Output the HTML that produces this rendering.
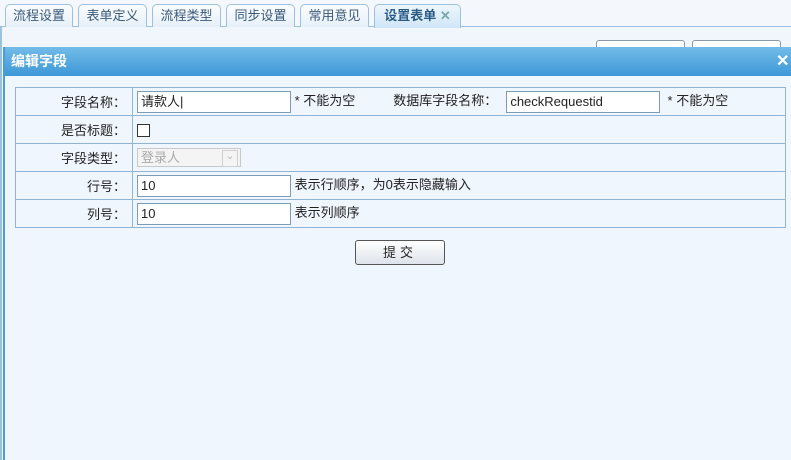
<!DOCTYPE html>
<html><head><meta charset="utf-8"><style>
*{margin:0;padding:0;box-sizing:border-box}
html,body{width:791px;height:460px;overflow:hidden}
body{background:#f1f6fc;font-family:"Liberation Sans","Noto Sans CJK SC",sans-serif;font-size:13px;color:#222;position:relative}
.tabbar{position:absolute;left:0;top:0;width:791px;height:27px;border-bottom:1px solid #9cc0dd;background:#f4f8fc}
.tab{position:absolute;top:4px;height:23px;border:1px solid #9cc0dd;border-bottom:none;border-radius:5px 5px 0 0;background:linear-gradient(#fbfdff,#e6eff8);color:#3a5a7a;font-size:13px;text-align:center;line-height:21px}
.tab.act{background:linear-gradient(#eef6fd,#cfe6f8);font-weight:bold;color:#2a5a86;height:24px}
.lb{position:absolute;left:0;top:27px;width:2px;height:433px;background:#9cc0dd}
.btnbg{position:absolute;top:40px;height:12px;border:1px solid #8a9aaa;border-radius:3px;background:#fff}
.dlg{position:absolute;left:3px;top:47px;width:788px;height:413px;border-left:2px solid #4a9ed6;background:#f0f6fd;overflow:hidden}
.hd{height:29px;background:linear-gradient(#72bbe9,#3d98d6);color:#fff;font-weight:bold;font-size:14px;line-height:29px;padding-left:6px}
.x{position:absolute;left:771px;top:7px;width:15px;height:15px;color:#fff;font-weight:bold;font-size:16px;line-height:15px}
table{position:absolute;left:10px;top:40px;width:771px;border-collapse:collapse;background:#f0f6fd}
td{border:1px solid #90b4d2;height:28px;padding:0 4px;white-space:nowrap}
td.l{width:117px;text-align:right;padding-right:6px}
.in{display:inline-block;vertical-align:middle;width:154px;height:22px;border:1px solid #7f9db9;background:#fff;line-height:20px;padding-left:3px;font-size:13px}
.cb{display:inline-block;vertical-align:middle;width:13px;height:13px;border:1px solid #333;background:#fff}
.sel{display:inline-block;vertical-align:middle;width:104px;height:19px;border:1px solid #c9c9c9;background:#f4f4f4;color:#aaa;line-height:17px;padding-left:3px;position:relative}
.sel:after{content:"⌄";position:absolute;right:2px;top:1px;width:14px;height:15px;border:1px solid #d0d0d0;color:#bbb;font-size:11px;text-align:center;line-height:10px}
.sub{position:absolute;left:350px;top:193px;width:90px;height:25px;border:1px solid #555;border-radius:3px;background:linear-gradient(#fff,#dde3ea);text-align:center;line-height:23px;letter-spacing:4px}
</style></head><body>
<div class="tabbar">
<div class="tab" style="left:5px;width:68px">流程设置</div>
<div class="tab" style="left:78px;width:69px">表单定义</div>
<div class="tab" style="left:152px;width:69px">流程类型</div>
<div class="tab" style="left:226px;width:69px">同步设置</div>
<div class="tab" style="left:300px;width:69px">常用意见</div>
<div class="tab act" style="left:374px;width:87px">设置表单 <span style="color:#7aa">✕</span></div>
</div>
<div class="lb"></div>
<div class="btnbg" style="left:596px;width:89px"></div>
<div class="btnbg" style="left:692px;width:89px"></div>
<div class="dlg">
<div class="hd">编辑字段</div>
<div class="x">✕</div>
<table>
<tr><td class="l">字段名称：</td><td><span class="in">请款人|</span> * 不能为空<span style="margin-left:38px">数据库字段名称：</span><span class="in" style="margin-left:9px">checkRequestid</span> &nbsp;* 不能为空</td></tr>
<tr><td class="l">是否标题：</td><td><span class="cb"></span></td></tr>
<tr><td class="l">字段类型：</td><td><span class="sel">登录人</span></td></tr>
<tr><td class="l">行号：</td><td><span class="in">10</span> 表示行顺序，为0表示隐藏输入</td></tr>
<tr><td class="l">列号：</td><td><span class="in">10</span> 表示列顺序</td></tr>
</table>
<div class="sub">提交</div>
</div>
</body></html>
